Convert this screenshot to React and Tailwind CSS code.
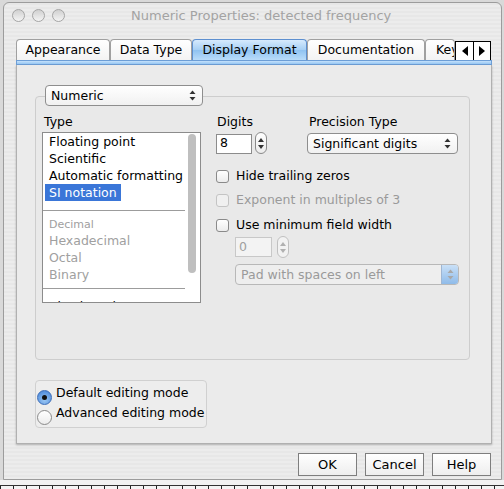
import React from "react";

const font = "font-['DejaVu_Sans',sans-serif]";

function UpDown({ disabled }) {
  const c = disabled ? "#a8a8a8" : "#333";
  return (
    <svg width="7" height="11" viewBox="0 0 7 11">
      <path d="M3.5 0.5 L6.5 4 L0.5 4 Z" fill={c} />
      <path d="M3.5 10.5 L6.5 7 L0.5 7 Z" fill={c} />
    </svg>
  );
}

function Popup({ label, width, disabled, blueArrow }) {
  return (
    <div
      className={`flex h-[21px] items-center justify-between rounded-[4px] border pl-[5px] pr-[6px] ${
        disabled
          ? "border-[#b8b8b8] bg-[#eeeeee] text-[#9a9a9a]"
          : "border-[#8e8e8e] bg-[linear-gradient(#ffffff,#f1f1f1)] text-black"
      }`}
      style={{ width }}
    >
      <span className="leading-[19px]">{label}</span>
      {blueArrow ? (
        <div className="-mr-[6px] flex h-[19px] w-[17px] items-center justify-center rounded-r-[3px] border-l border-[#9fb6d3] bg-[linear-gradient(#c9e0f7,#8fbbe9)]">
          <UpDown disabled />
        </div>
      ) : (
        <UpDown disabled={disabled} />
      )}
    </div>
  );
}

function Stepper({ disabled }) {
  return (
    <div
      className={`flex h-[22px] w-[12px] flex-col items-center justify-center gap-[3px] rounded-full border ${
        disabled ? "border-[#c0c0c0] bg-[#f2f2f2]" : "border-[#8a8a8a] bg-[linear-gradient(#ffffff,#ececec)]"
      }`}
    >
      <svg width="6" height="4" viewBox="0 0 6 4">
        <path d="M3 0 L6 4 L0 4 Z" fill={disabled ? "#b0b0b0" : "#333"} />
      </svg>
      <svg width="6" height="4" viewBox="0 0 6 4">
        <path d="M3 4 L6 0 L0 0 Z" fill={disabled ? "#b0b0b0" : "#333"} />
      </svg>
    </div>
  );
}

function Check({ label, disabled }) {
  return (
    <div className="flex h-[24px] items-center">
      <div
        className={`h-[13px] w-[13px] rounded-[3px] border ${
          disabled ? "border-[#c4c4c4] bg-[#f0f0f0]" : "border-[#8a8a8a] bg-[linear-gradient(#ffffff,#ececec)]"
        }`}
      />
      <span className={`ml-[7px] ${disabled ? "text-[#9a9a9a]" : "text-black"}`}>{label}</span>
    </div>
  );
}

function Tab({ label, width, selected, clip }) {
  return (
    <div
      className={`flex h-[21px] items-center rounded-t-[4px] border border-b-0 ${
        clip ? "justify-start overflow-hidden pl-[10px]" : "justify-center"
      } ${
        selected
          ? "border-[#5d8fcf] bg-[linear-gradient(#d6eafd,#a6cff4_50%,#8fc3f1_51%,#b9dcfa)]"
          : "border-[#a0a0a0] bg-[linear-gradient(#ffffff,#f3f3f3)]"
      }`}
      style={{ width }}
    >
      <span className="whitespace-nowrap leading-[18px] text-black">{label}</span>
    </div>
  );
}

function Radio({ label, selected }) {
  return (
    <div className="flex h-[20px] items-start">
      <div
        className={`mt-[7px] flex h-[15px] w-[15px] shrink-0 items-center justify-center rounded-full border ${
          selected
            ? "border-[#3c6db8] bg-[radial-gradient(circle_at_50%_70%,#9cc8f4,#3f7fd6)]"
            : "border-[#8a8a8a] bg-[linear-gradient(#ffffff,#ececec)]"
        }`}
      >
        {selected && <div className="h-[5px] w-[5px] rounded-full bg-[#111]" />}
      </div>
      <span className="ml-[4px] leading-[20px] text-black">{label}</span>
    </div>
  );
}

function Button({ label }) {
  return (
    <div className="flex h-[23px] w-[59px] items-center justify-center border border-[#7e7e7e] bg-[linear-gradient(#ffffff,#eeeeee)] text-[13px] text-black">
      {label}
    </div>
  );
}

export default function App() {
  return (
    <div className={`${font} flex h-[489px] w-[504px] flex-col overflow-hidden bg-[#d9d9d9] text-[12.5px]`}>
      <div className="ml-[3px] mt-[2px] flex h-[478px] w-[499px] flex-col rounded-t-[6px] border border-[#9c9c9c] bg-[repeating-linear-gradient(0deg,#ececec_0px,#ececec_2px,#e7e7e7_2px,#e7e7e7_4px)]">
        {/* title bar */}
        <div className="flex h-[25px] shrink-0 items-center">
          <div className="ml-[8px] flex gap-[7px]">
            <div className="h-[13px] w-[13px] rounded-full border border-[#a5a5a5] bg-[linear-gradient(#d0d0d0,#f4f4f4)]" />
            <div className="h-[13px] w-[13px] rounded-full border border-[#a5a5a5] bg-[linear-gradient(#d0d0d0,#f4f4f4)]" />
            <div className="h-[13px] w-[13px] rounded-full border border-[#a5a5a5] bg-[linear-gradient(#d0d0d0,#f4f4f4)]" />
          </div>
          <div className="ml-[66px] text-[13px] text-[#a3a3a3]">Numeric Properties: detected frequency</div>
        </div>

        {/* tabs */}
        <div className="ml-[12px] mt-[11px] flex shrink-0 items-end">
          <Tab label="Appearance" width={94} />
          <Tab label="Data Type" width={82} />
          <Tab label="Display Format" width={115} selected />
          <Tab label="Documentation" width={118} />
          <Tab label="Key Navigation" width={30} clip />
          <div className="mb-[-1px] flex h-[20px]">
            <div className="flex w-[19px] items-center justify-center border border-black bg-white">
              <svg width="6" height="10" viewBox="0 0 6 10">
                <path d="M0 5 L6 0 L6 10 Z" fill="#000" />
              </svg>
            </div>
            <div className="-ml-px flex w-[18px] items-center justify-center border border-black bg-white">
              <svg width="6" height="10" viewBox="0 0 6 10">
                <path d="M6 5 L0 0 L0 10 Z" fill="#000" />
              </svg>
            </div>
          </div>
        </div>
        <div className="ml-[12px] h-[5px] w-[476px] shrink-0 border border-[#6d9ed6] bg-[linear-gradient(#c5e1fb,#95c6f3)]" />

        {/* panel */}
        <div className="ml-[12px] flex h-[379px] w-[476px] shrink-0 flex-col border border-t-0 border-[#b0b0b0] bg-[#ebebeb] shadow-[0_1px_2px_rgba(0,0,0,0.25)]">
          {/* group box */}
          <div className="ml-[18px] mt-[31px] flex h-[264px] w-[435px] shrink-0 flex-col rounded-[4px] border border-[#cdcdcd] bg-[#e9e9e9]">
            <div className="relative -mt-[12px] ml-[9px] w-fit">
              <Popup label="Numeric" width={158} />
            </div>
            <div className="ml-[6px] mt-[8px] flex">
              {/* type list */}
              <div className="flex flex-col">
                <div className="h-[16px] pl-[2px] leading-[16px] text-black">Type</div>
                <div className="mt-[2px] flex h-[171px] w-[159px] overflow-hidden border border-[#8c8c8c] bg-white">
                  <div className="flex w-[142px] flex-col">
                    <div className="pl-[6px] leading-[17px] text-black">Floating point</div>
                    <div className="pl-[6px] leading-[17px] text-black">Scientific</div>
                    <div className="whitespace-nowrap pl-[6px] leading-[17px] text-black">Automatic formatting</div>
                    <div className="ml-[2px] w-fit bg-[#3a76d8] px-[4px] leading-[17px] text-white">SI notation</div>
                    <div className="mt-[9px] h-px shrink-0 bg-[#9c9c9c]" />
                    <div className="mt-[7px] pl-[6px] text-[11px] leading-[14px] text-[#a0a0a0]">Decimal</div>
                    <div className="pl-[6px] leading-[17px] text-[#a0a0a0]">Hexadecimal</div>
                    <div className="pl-[6px] leading-[17px] text-[#a0a0a0]">Octal</div>
                    <div className="pl-[6px] leading-[17px] text-[#a0a0a0]">Binary</div>
                    <div className="mt-[5px] h-px shrink-0 bg-[#9c9c9c]" />
                    <div className="mt-[9px] shrink-0 whitespace-nowrap pl-[6px] leading-[17px] text-black">Absolute time</div>
                  </div>
                  <div className="flex w-[15px] flex-col pt-[1px]">
                    <div className="ml-[3px] h-[139px] w-[8px] rounded-full bg-[#bfbfbf]" />
                  </div>
                </div>
              </div>

              {/* right side */}
              <div className="ml-[15px] flex flex-col">
                <div className="flex">
                  <div className="flex flex-col">
                    <div className="h-[16px] pl-[1px] leading-[16px] text-black">Digits</div>
                    <div className="mt-[2px] flex items-center">
                      <div className="mt-px flex h-[20px] w-[36px] items-center border border-[#8c8c8c] bg-white pl-[3px] text-black">8</div>
                      <div className="ml-[3px]">
                        <Stepper />
                      </div>
                    </div>
                  </div>
                  <div className="ml-[40px] flex flex-col">
                    <div className="h-[16px] pl-[2px] leading-[16px] text-black">Precision Type</div>
                    <div className="mt-[3px]">
                      <Popup label="Significant digits" width={151} />
                    </div>
                  </div>
                </div>
                <div className="mt-[10px] flex flex-col">
                  <Check label="Hide trailing zeros" />
                  <Check label="Exponent in multiples of 3" disabled />
                  <div className="h-px" />
                  <Check label="Use minimum field width" />
                  <div className="ml-[19px] flex items-start">
                    <div className="flex h-[20px] w-[37px] items-center border border-[#c8c8c8] bg-[#f3f3f3] pl-[3px] text-[#a0a0a0]">0</div>
                    <div className="-mt-[1px] ml-[5px]">
                      <Stepper disabled />
                    </div>
                  </div>
                  <div className="ml-[19px] mt-[6px]">
                    <Popup label="Pad with spaces on left" width={224} disabled blueArrow />
                  </div>
                </div>
              </div>
            </div>
          </div>

          {/* radio box */}
          <div className="ml-[18px] mt-[20px] flex h-[48px] w-[172px] shrink-0 flex-col rounded-[4px] border border-[#d0d0d0] bg-[#ededed] pl-px pt-[2px]">
            <Radio label="Default editing mode" selected />
            <Radio label="Advanced editing mode" />
          </div>
        </div>

        {/* buttons */}
        <div className="mr-[10px] mt-[9px] flex shrink-0 justify-end gap-[8px]">
          <Button label="OK" />
          <Button label="Cancel" />
          <Button label="Help" />
        </div>
      </div>
      <div className="h-[5px] shrink-0 bg-[#f2f2f2]" />
      <div className="h-[4px] shrink-0 border-t border-[#333] bg-[repeating-linear-gradient(90deg,#222_0px,#222_1px,#f4f4f4_1px,#f4f4f4_13px)]" />
    </div>
  );
}
